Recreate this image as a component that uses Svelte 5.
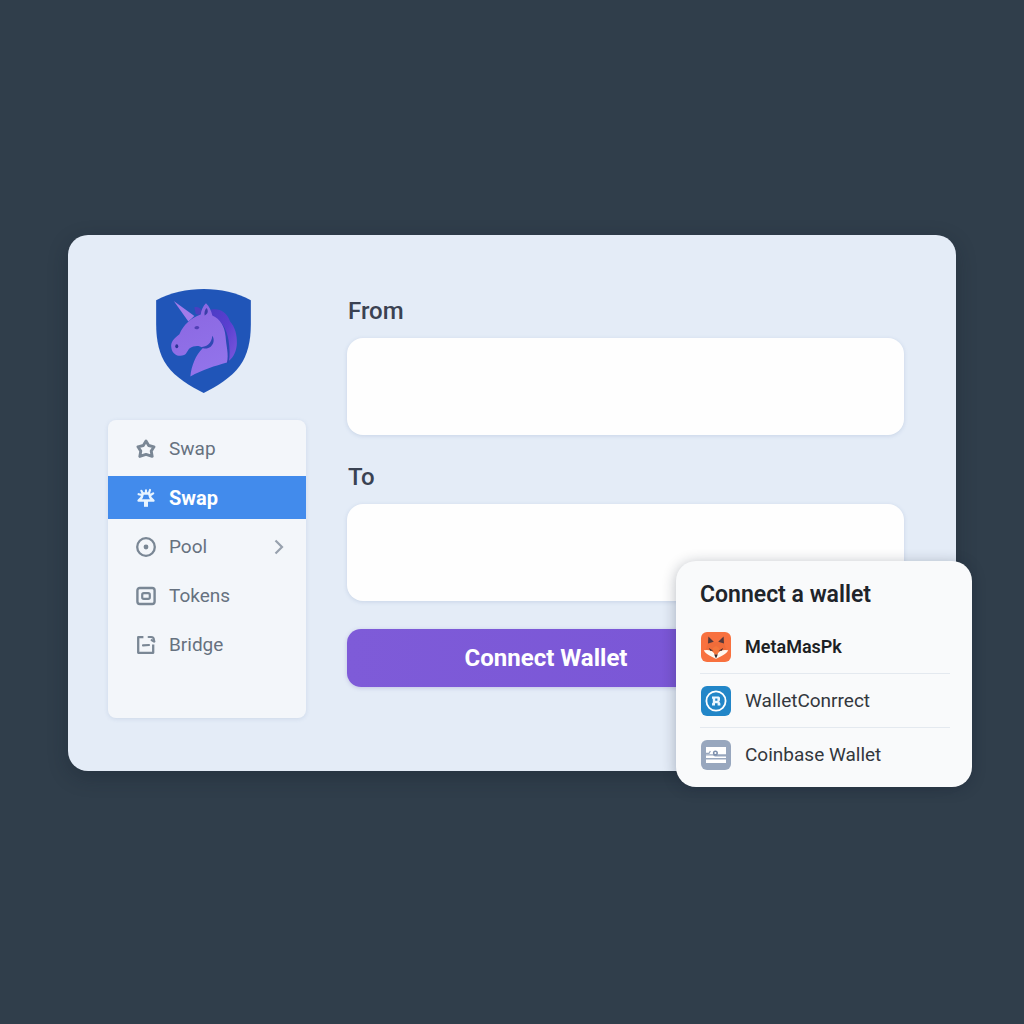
<script>
  const nav = [
    { icon: 'star', label: 'Swap' },
    { icon: 'spark', label: 'Swap', active: true },
    { icon: 'pool', label: 'Pool', more: true },
    { icon: 'tokens', label: 'Tokens' },
    { icon: 'bridge', label: 'Bridge' }
  ];
  const wallets = [
    { icon: 'fox', label: 'MetaMasPk', strong: true },
    { icon: 'connect', label: 'WalletConrrect' },
    { icon: 'coin', label: 'Coinbase Wallet' }
  ];
  let from = $state('');
  let to = $state('');
</script>

<main class="page">
  <div class="card">
    <aside class="side">
      <svg class="logo" viewBox="48 41 285 313" role="img" aria-label="Unicorn shield">
        <defs>
          <linearGradient id="mane" x1="0" y1="0" x2="1" y2="1">
            <stop offset="0" stop-color="#4a3cc4" />
            <stop offset="0.5" stop-color="#5a3fd0" />
            <stop offset="1" stop-color="#7a58dc" />
          </linearGradient>
          <linearGradient id="coat" x1="0" y1="0" x2="0.3" y2="1">
            <stop offset="0" stop-color="#8a66e0" />
            <stop offset="1" stop-color="#9273ea" />
          </linearGradient>
        </defs>
        <path fill="#2055b8" d="M48 75C92 51 140 41 191 41S290 51 333 75V146C333 196 324 238 300 272C273 309 233 332 191 354C149 332 108 309 81 272C57 238 48 196 48 146Z" />
        <path fill="url(#mane)" d="M214 103C240 98 262 113 270 138C285 155 292 178 291 204C290 226 282 245 267 257L250 220L206 118Z" />
        <path fill="#4a3fc0" d="M163 96C173 94 182 98 186 108L178 119L167 116Z" />
        <path fill="#2b48b4" d="M216 122C246 136 260 160 266 196C269 218 271 240 266 264L252 262L240 170Z" />
        <path fill="#a27bea" d="M101 77L163 122L145 139Z" />
        <path fill="url(#coat)" d="M198 84C208 94 214 106 217 121C241 132 254 153 257 184C259 214 267 238 261 262C226 272 187 284 151 304C154 272 167 239 188 219C176 209 161 213 149 219C142 225 141 235 132 240C115 247 97 237 94 219C90 199 103 190 118 177C130 150 152 128 182 118C184 104 189 92 198 84Z" />
        <path fill="#3b3fa8" d="M200 98C206 107 204 115 194 121C192 112 194 104 200 98Z" />
        <path fill="#5140b5" d="M163 158C165 152 173 150 178 156C176 163 168 165 163 158Z" />
        <ellipse fill="#2b3596" cx="110" cy="213" rx="4.5" ry="6" />
        <path fill="#2f48b4" d="M217 182C224 192 222 207 212 215C203 222 191 222 183 216C200 216 215 205 217 182Z" />
      </svg>

      <nav class="nav">
        {#each nav as item}
          <a href="#{item.icon}" class="item" class:active={item.active}>
            <svg class="glyph" viewBox="0 0 20 20" fill="none" stroke="currentColor" aria-hidden="true">
              {#if item.icon === 'star'}
                <path stroke-width="2.9" stroke-linejoin="round" d="M10 2L12.7 6.5L18 7.8L15.2 12.1L16.2 17.4L10 15.4L3.8 17.4L4.8 12.1L2 7.8L7.3 6.5Z" />
              {:else if item.icon === 'spark'}
                <path stroke-width="2.5" stroke-linejoin="round" d="M6.8 5.6H13.2L14.4 9.6L17.4 12.6H2.6L5.6 9.6Z" />
                <path stroke-width="2.2" stroke-linecap="round" d="M6.8 5.4L5.4 2.8M10 5V2.4M12.8 5.4L14 2M5 6.8L2.6 6.2M15 6.8L17.2 5.4" />
                <path stroke-width="4" d="M10 12.6V18.8" />
              {:else if item.icon === 'pool'}
                <circle cx="10" cy="10" r="8.8" stroke-width="2.3" />
                <circle cx="10" cy="10" r="2.4" fill="currentColor" stroke="none" />
              {:else if item.icon === 'tokens'}
                <rect x="1.4" y="2" width="17.2" height="16" rx="2.4" stroke-width="2.4" />
                <rect x="6.2" y="7.2" width="7.6" height="5.6" rx="1.6" stroke-width="2.2" />
              {:else}
                <path stroke-width="2.3" stroke-linejoin="round" d="M7.4 2.2H2.2V17.8H17.2V9.4" />
                <path stroke-width="2.1" stroke-linecap="round" stroke-linejoin="round" d="M7 10.4L13 10M12.6 2H15Q18 2 18 5.2L18.4 6.6M17.6 6.4L15.6 5.2" />
              {/if}
            </svg>
            <span>{item.label}</span>
            {#if item.more}
              <svg class="more" viewBox="0 0 10 16" fill="none" aria-hidden="true">
                <path d="M1.5 1.5L8 8L1.5 14.5" stroke="currentColor" stroke-width="2.2" />
              </svg>
            {/if}
          </a>
        {/each}
      </nav>
    </aside>

    <form class="form" onsubmit={(e) => e.preventDefault()}>
      <label for="from">From</label>
      <input id="from" type="text" bind:value={from} />
      <label for="to">To</label>
      <input id="to" type="text" bind:value={to} />
      <button class="connect" type="submit">Connect Wallet</button>
    </form>

    <section class="popup" aria-labelledby="popup-title">
      <h2 id="popup-title">Connect a wallet</h2>
      <ul>
        {#each wallets as w}
          <li>
            <button type="button" class="wallet" class:strong={w.strong}>
              <svg class="badge" viewBox="0 0 30 30" aria-hidden="true">
                {#if w.icon === 'fox'}
                  <rect width="30" height="30" rx="6" fill="#f8713f" />
                  <path fill="#f06c3a" d="M7 5L12 10H18L23 5L23.5 13L26 19L15 26L4 19L6.5 13Z" />
                  <path fill="#54383a" d="M7.4 4.4L12.8 9.8L7 11.6ZM22.6 4.4L17.2 9.8L23 11.6Z" />
                  <path fill="#fff8f0" d="M2.8 18.2Q7 17.4 10 18.6L13.6 21.4L15 23L16.4 21.4L20 18.6Q23 17.4 27.2 18.2C25.6 22 21 23.6 15 27C9 23.6 4.4 22 2.8 18.2Z" />
                  <path fill="#f4763c" d="M11.6 16L15 14L18.4 16L16.6 22.6H13.4Z" />
                  <path fill="#3b2a2c" d="M7.8 16L12.2 18.8L9.2 18.8ZM22.2 16L17.8 18.8L20.8 18.8ZM13.2 22.6H16.8L15 26.4Z" />
                {:else if w.icon === 'connect'}
                  <rect width="30" height="30" rx="6" fill="#2286c8" />
                  <circle cx="15" cy="15" r="9.6" fill="none" stroke="#fff" stroke-width="1.8" />
                  <path fill="#eaf6ff" fill-rule="evenodd" d="M11 10.4H17.6Q19 10.4 19 12V14.4L18.2 15.2L19.4 17.4V19.6H16.6V17.2H14V19.6H11V17.4L11.8 16.6V12.8H11ZM14.2 12.6V14.8H16.4V12.6Z" />
                {:else}
                  <rect width="30" height="30" rx="6" fill="#98a7be" />
                  <path fill="#fff" d="M5 7H25V14.2H5ZM5 15.4H12L14 16.6H25V18H5ZM5 19.4H25V23H5Z" />
                  <path fill="none" stroke="#98a7be" stroke-width="1.2" d="M4 13.4H8L9.4 11" />
                  <circle cx="14.4" cy="13" r="1.8" fill="#fff" stroke="#7d8fac" stroke-width="1.5" />
                {/if}
              </svg>
              <span>{w.label}</span>
            </button>
          </li>
        {/each}
      </ul>
    </section>
  </div>
</main>

<style>
  :global(body) {
    margin: 0;
    background: #303e4b;
    font-family: Roboto, 'Liberation Sans', sans-serif;
  }
  .page {
    box-sizing: border-box;
    min-height: 100vh;
    padding: 40px 68px 58px;
    display: flex;
    align-items: center;
  }
  .card {
    position: relative;
    flex: 1;
    display: grid;
    grid-template-columns: 198px 1fr;
    column-gap: 41px;
    padding: 54px 52px 53px 40px;
    border-radius: 20px;
    background: #e4ecf7;
    box-shadow: 0 6px 20px rgba(18, 28, 40, 0.3);
  }
  .side {
    display: flex;
    flex-direction: column;
    gap: 27px;
  }
  .logo {
    width: 95px;
    height: 104px;
    margin-left: 48px;
  }
  .nav {
    display: flex;
    flex-direction: column;
    gap: 6px;
    padding: 7px 0 52px;
    border-radius: 8px;
    background: #f3f6fa;
    box-shadow: 0 1px 4px rgba(90, 120, 170, 0.16);
  }
  .item {
    display: flex;
    align-items: center;
    gap: 13px;
    height: 43px;
    padding: 0 22px 0 28px;
    color: #66717f;
    font-size: 19px;
    line-height: 24px;
    text-decoration: none;
  }
  .item.active {
    background: #428bec;
    color: #fff;
    font-size: 20px;
    font-weight: 700;
  }
  .glyph {
    width: 20px;
    height: 20px;
    color: #7a8795;
  }
  .active .glyph {
    color: #e8f4ff;
  }
  .more {
    width: 10px;
    height: 16px;
    margin-left: auto;
    color: #98a1ae;
  }
  .form {
    display: flex;
    flex-direction: column;
    padding-top: 8px;
  }
  label {
    margin-bottom: 13px;
    padding-left: 1px;
    color: #3a4252;
    font-size: 24px;
    font-weight: 500;
    line-height: 28px;
  }
  input {
    box-sizing: border-box;
    width: 100%;
    height: 97px;
    margin: 0 0 28px;
    padding: 0 24px;
    border: 0;
    border-radius: 16px;
    background: #fefefe;
    box-shadow: 0 1px 4px rgba(90, 120, 170, 0.2);
    color: #3a4252;
    font: 500 24px/28px Roboto, 'Liberation Sans', sans-serif;
  }
  button {
    border: 0;
    font-family: inherit;
    cursor: pointer;
  }
  .connect {
    width: 398px;
    max-width: 100%;
    height: 58px;
    border-radius: 14px;
    background: linear-gradient(90deg, #7e5bd8, #7a56d6);
    box-shadow: 0 1px 4px rgba(90, 80, 170, 0.25);
    color: #fff;
    font-size: 24px;
    font-weight: 700;
  }
  .popup {
    position: absolute;
    right: -16px;
    bottom: -16px;
    box-sizing: border-box;
    width: 296px;
    padding: 20px 22px 6px 24px;
    border-radius: 20px;
    background: #f9fafb;
    box-shadow: 0 2px 14px rgba(20, 30, 50, 0.3);
  }
  h2 {
    margin: 0 0 11px;
    color: #20242a;
    font-size: 23px;
    font-weight: 600;
    line-height: 28px;
  }
  ul {
    margin: 0;
    padding: 0;
    list-style: none;
  }
  li + li {
    border-top: 1px solid #e4e9ef;
  }
  .wallet {
    display: flex;
    align-items: center;
    gap: 14px;
    width: 100%;
    height: 53px;
    padding: 0 1px;
    background: none;
    color: #33373d;
    font-size: 19px;
    text-align: left;
  }
  .wallet.strong {
    color: #1c1f24;
    font-size: 18px;
    font-weight: 600;
  }
  .badge {
    width: 30px;
    height: 30px;
  }
</style>
